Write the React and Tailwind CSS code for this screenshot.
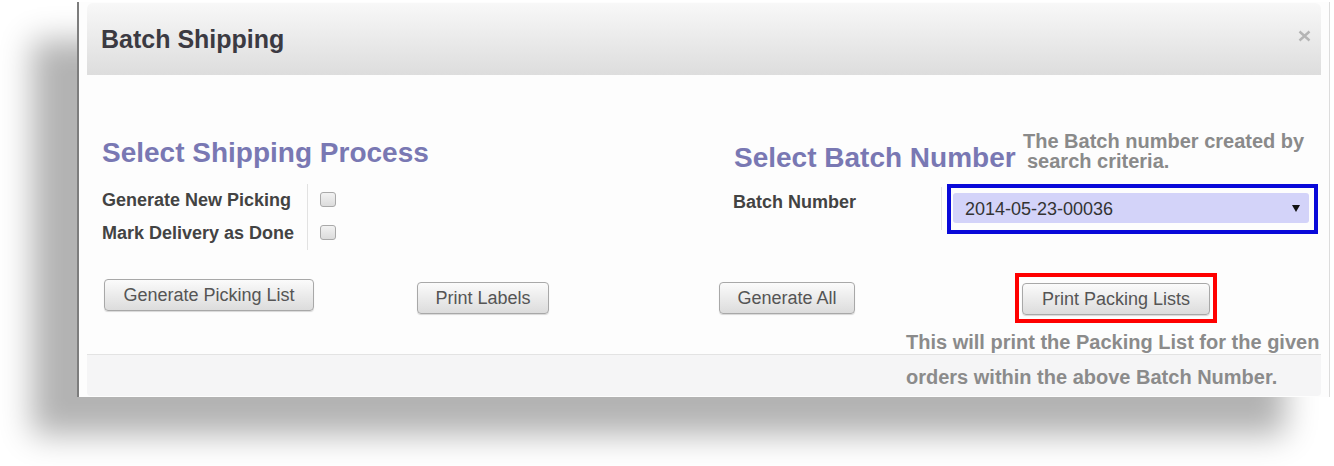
import React from 'react';

const btn =
  'h-[32px] rounded-[4px] border border-[#a8a8a8] bg-linear-to-b from-[#fbfbfb] to-[#dcdcdc] text-[18px] leading-[30px] text-[#555] shadow-[0_1px_1px_rgba(0,0,0,0.15)] text-center whitespace-nowrap';

function Checkbox() {
  return (
    <div className="h-[15px] w-[16px] rounded-[3px] border border-[#a9a9a9] bg-linear-to-b from-[#f2f2f2] to-[#dcdcdc]" />
  );
}

export default function App() {
  return (
    <div className="h-[466px] w-[1334px] overflow-hidden bg-white pl-[77px] pt-[2px] font-['Liberation_Sans',Arial,sans-serif]">
      <div className="h-[395px] w-[1253px] border-l-2 border-r border-l-[#7d7d7d] border-r-[#dcdcdc] bg-[#fdfdfd] px-[8px] pt-[1px] shadow-[-45px_38px_30px_#b3b3b3]">
        {/* header */}
        <div className="flex h-[72px] items-center justify-between rounded-t-[6px] bg-linear-to-b from-[#f8f8f8] to-[#dddddd] pl-[14px] pr-[10px]">
          <div className="text-[25px] font-bold leading-[72px] text-[#3b3a42]">
            Batch Shipping
          </div>
          <svg width="13" height="12" viewBox="0 0 13 12" className="mb-[6px]">
            <path d="M1.5 1.5 L11.5 10.5 M11.5 1.5 L1.5 10.5" stroke="#b5b5b5" strokeWidth="2.4" />
          </svg>
        </div>

        {/* body */}
        <div className="h-[279px]">
          <div className="flex">
            {/* left column */}
            <div className="w-[646px] pl-[15px]">
              <div className="mt-[62px] text-[28px] font-bold leading-[32px] text-[#7978b3] whitespace-nowrap">
                Select Shipping Process
              </div>
              <div className="mt-[15px] flex">
                <div className="w-[206px] border-r border-[#e2e2e2] text-[18px] font-bold leading-[33px] text-[#434343]">
                  <div>Generate New Picking</div>
                  <div>Mark Delivery as Done</div>
                </div>
                <div className="pl-[12px]">
                  <div className="h-[33px] pt-[8px]">
                    <Checkbox />
                  </div>
                  <div className="h-[33px] pt-[8px]">
                    <Checkbox />
                  </div>
                </div>
              </div>
            </div>

            {/* right column */}
            <div className="mt-[56px]">
              <div className="flex h-[53px] items-start">
                <div className="mt-[11px] w-[290px] pl-[1px] text-[28px] font-bold leading-[32px] text-[#7978b3] whitespace-nowrap">
                  Select Batch Number
                </div>
                <div className="text-[20px] font-bold leading-[20px] text-[#8a8a8a] whitespace-nowrap">
                  The Batch number created by
                  <br />
                  <span className="pl-[4px]">search criteria.</span>
                </div>
              </div>
              <div className="flex h-[50px] items-start">
                <div className="mt-[3px] h-[43px] w-[209px] border-r border-[#e2e2e2] pt-[4px] text-[18px] font-bold leading-[22px] text-[#434343]">
                  Batch Number
                </div>
                <div className="ml-[5px] h-[50px] w-[371px] border-4 border-[#0909d9] pl-[2px] pr-[5px] pt-[5px]">
                  <div className="flex h-[30px] items-center justify-between rounded-[3px] bg-[#d3d3f9] pl-[12px] pr-[9px]">
                    <span className="pt-[2px] text-[18px] leading-[28px] text-[#333]">2014-05-23-00036</span>
                    <svg width="8" height="7" viewBox="0 0 8 7" className="mt-[1px]">
                      <path d="M0 0 H8 L4 7 Z" fill="#111" />
                    </svg>
                  </div>
                </div>
              </div>
            </div>
          </div>

          {/* buttons */}
          <div className="flex items-start">
            <button className={`${btn} ml-[17px] mt-[29px] w-[210px]`}>Generate Picking List</button>
            <button className={`${btn} ml-[103px] mt-[32px] w-[132px]`}>Print Labels</button>
            <button className={`${btn} ml-[170px] mt-[32px] w-[136px]`}>Generate All</button>
            <div className="ml-[160px] mt-[23px] h-[50px] w-[202px] border-4 border-[#ff0000] pl-[3px] pt-[6px]">
              <button className={`${btn} w-[188px]`}>Print Packing Lists</button>
            </div>
          </div>

          <div className="relative ml-[819px] mt-[2px] whitespace-nowrap text-[20px] font-bold leading-[35px] text-[#8b8b8b]">
            This will print the Packing List for the given
            <br />
            orders within the above Batch Number.
          </div>
        </div>

        {/* footer */}
        <div className="h-[42px] rounded-b-[4px] border-t border-[#e3e3e3] bg-[#f5f5f6]" />
      </div>
    </div>
  );
}
